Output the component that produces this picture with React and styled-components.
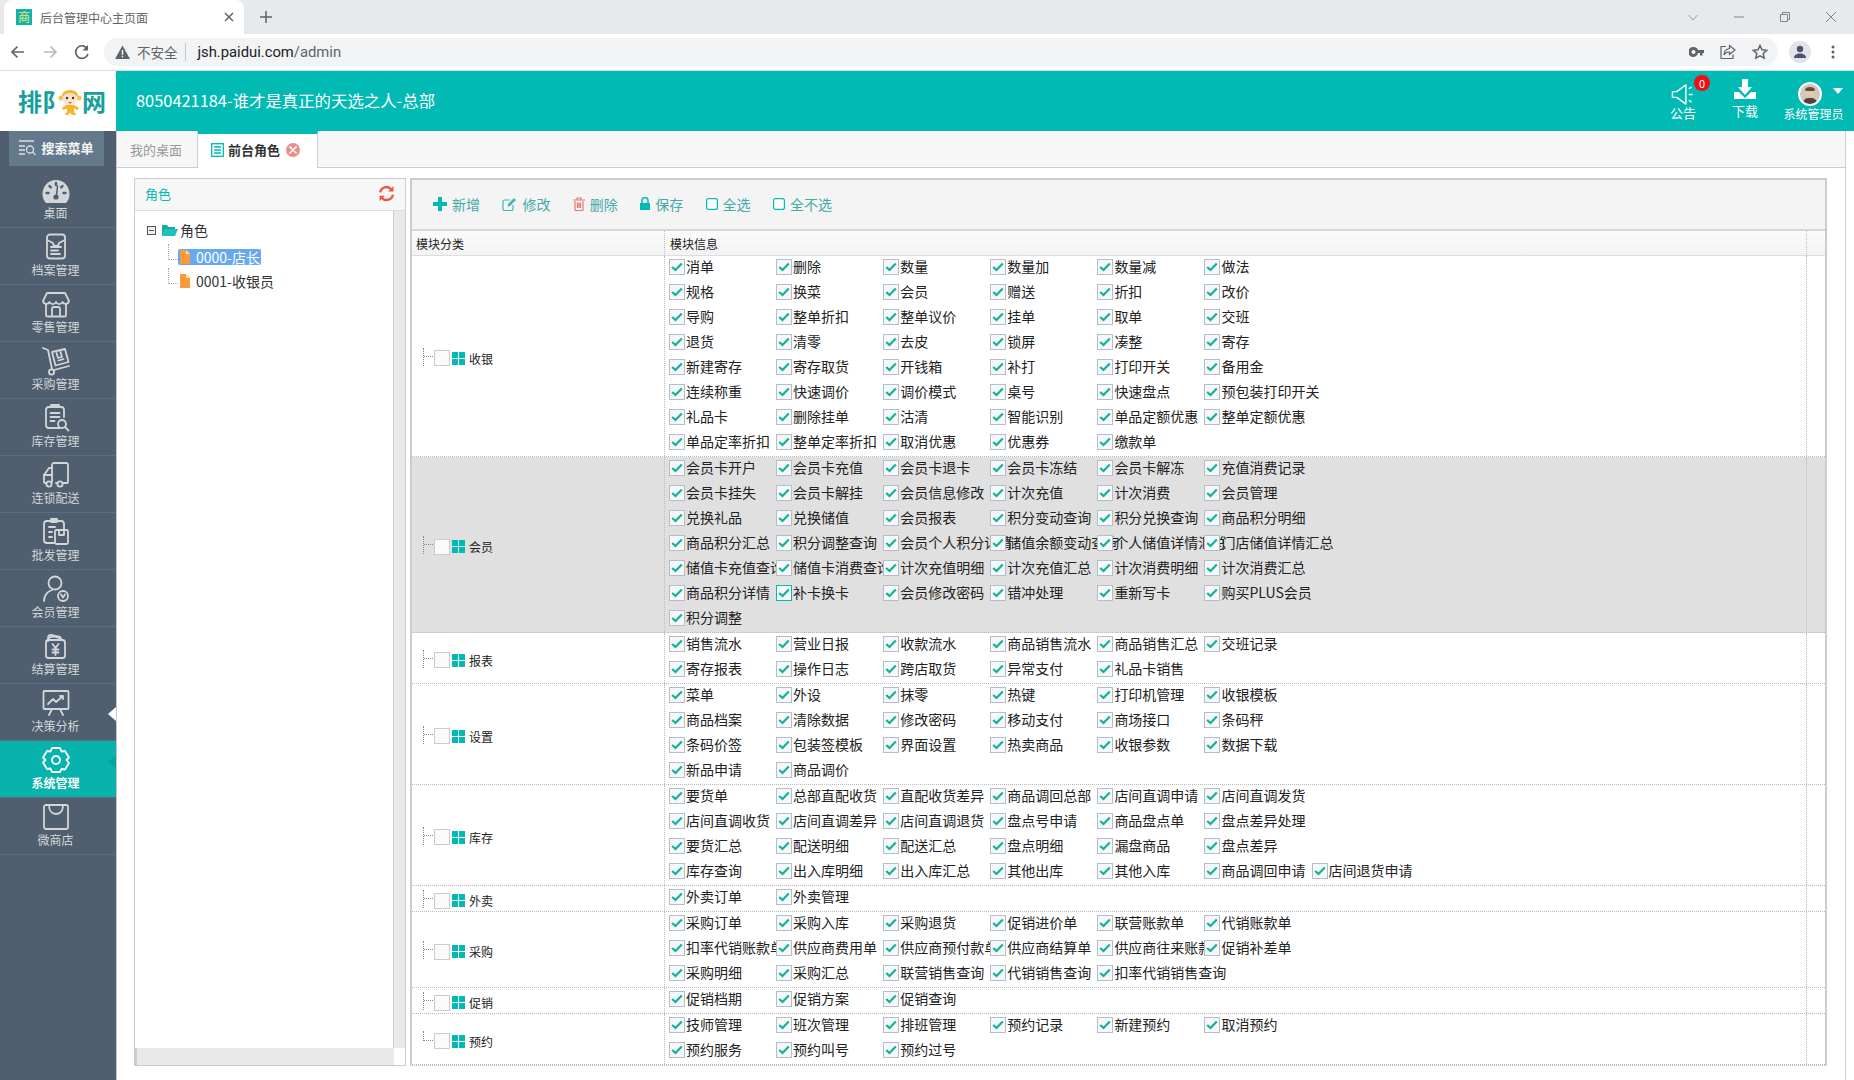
import React from 'react'
import styled, { createGlobalStyle } from 'styled-components'

const TEAL = '#00bab3'
const FONT = `"Noto Sans CJK SC", "Liberation Sans", sans-serif`

const GlobalStyle = createGlobalStyle`
  html, body {
    margin: 0;
    padding: 0;
    background: #fff;
    font-family: ${FONT};
    overflow: hidden;
  }
  * { box-sizing: border-box; }
`

const Page = styled.div`
  width: 1854px;
  height: 1080px;
  display: flex;
  flex-direction: column;
  overflow: hidden;
`

/* browser chrome */
const TabStrip = styled.div`
  height: 34px;
  background: #e7eaed;
  display: flex;
  align-items: stretch;
  padding-left: 4px;
  flex-shrink: 0;
`
const BrowserTab = styled.div`
  width: 240px;
  background: #fff;
  border-radius: 8px 8px 0 0;
  display: flex;
  align-items: center;
  padding-left: 12px;
  font-size: 12px;
  color: #5f6368;
`
const Favicon = styled.span`
  width: 16px;
  height: 16px;
  background: #10b5a8;
  color: #f1e27a;
  font-size: 12px;
  line-height: 16px;
  text-align: center;
  margin-right: 8px;
`
const TabClose = styled.span`
  margin-left: auto;
  margin-right: 10px;
  display: flex;
`
const NewTab = styled.span`
  width: 44px;
  display: flex;
  align-items: center;
  justify-content: center;
`
const WindowButtons = styled.div`
  margin-left: auto;
  display: flex;
  align-items: center;
  gap: 36px;
  padding-right: 18px;
`
const BrowserBar = styled.div`
  height: 37px;
  background: #fff;
  border-bottom: 1px solid #dadce0;
  display: flex;
  align-items: center;
  flex-shrink: 0;
`
const NavButtons = styled.div`
  width: 104px;
  display: flex;
  padding-left: 9px;
  gap: 14px;
`
const Address = styled.div`
  width: 1674px;
  height: 28px;
  border-radius: 14px;
  background: #f1f3f4;
  display: flex;
  align-items: center;
  padding-left: 11px;
  font-size: 14px;
  color: #5f6368;
`
const Insecure = styled.span`
  margin-left: 7px;
  padding-right: 7px;
  border-right: 1px solid #c4c7ca;
  line-height: 18px;
  font-size: 13.5px;
`
const Url = styled.span`
  margin-left: 12px;
  font-family: Roboto, "Noto Sans", sans-serif;
  font-size: 14.8px;
  color: #202124;
  em {
    font-style: normal;
    color: #5f6368;
  }
`
const AddressTools = styled.div`
  margin-left: auto;
  display: flex;
  align-items: center;
  gap: 16px;
  padding-right: 10px;
`
const Profile = styled.span`
  width: 22px;
  height: 22px;
  border-radius: 50%;
  background: #e1e3e8;
  margin-left: 11px;
  display: flex;
  align-items: center;
  justify-content: center;
`
const MoreDots = styled.span`
  margin-left: 20px;
  display: flex;
`

/* app header */
const AppHeader = styled.header`
  height: 60px;
  display: flex;
  flex-shrink: 0;
`
const Logo = styled.div`
  width: 116px;
  background: #fff;
  display: flex;
  align-items: center;
  padding-left: 18px;
  color: #17a09a;
  font-size: 24px;
  font-weight: 700;
  line-height: 1;
`
const LogoChar = styled.span`
  flex-shrink: 0;
  margin-right: ${p => p.$pull || 0}px;
`
const HeaderBar = styled.div`
  flex: 1;
  background: ${TEAL};
  display: flex;
  align-items: center;
  color: #fff;
`
const ShopName = styled.div`
  margin: 0 0 2px 20px;
  font-size: 16.4px;
`
const HeaderTools = styled.div`
  margin-left: auto;
  display: flex;
  height: 100%;
  padding-right: 9px;
`
const HeaderTool = styled.div`
  position: relative;
  width: ${p => p.$width}px;
  display: flex;
  flex-direction: column;
  align-items: center;
  padding-top: ${p => p.$top}px;
  font-size: ${p => p.$size || 13}px;
  line-height: 14px;
  white-space: nowrap;
  svg { display: block; }
`
const Badge = styled.span`
  position: absolute;
  top: 4px;
  left: 36px;
  width: 16px;
  height: 16px;
  border-radius: 50%;
  background: #f50b12;
  font-size: 11px;
  line-height: 16px;
  text-align: center;
`
const Avatar = styled.span`
  width: 24px;
  height: 24px;
  border-radius: 50%;
  border: 2px solid #fff;
  background: #cfc8c0;
  overflow: hidden;
  margin: 1px 7px 1px 0;
  display: block;
`
const Caret = styled.span`
  position: absolute;
  top: 17px;
  right: 2px;
  border-left: 5px solid transparent;
  border-right: 5px solid transparent;
  border-top: 6px solid #fff;
`

/* sidebar */
const Body = styled.div`
  flex: 1;
  display: flex;
  min-height: 0;
`
const Sidebar = styled.aside`
  width: 117px;
  background: #4f5f6f;
  border-right: 1px solid #c9c9c9;
  flex-shrink: 0;
`
const SearchMenu = styled.div`
  width: 95px;
  height: 35px;
  margin: 0 0 5px 9px;
  padding-bottom: 2px;
  background: #65798d;
  color: #f4f4f4;
  font-size: 13px;
  font-weight: 700;
  display: flex;
  align-items: center;
  justify-content: center;
  gap: 5px;
`
const MenuItem = styled.div`
  position: relative;
  height: 57px;
  padding: 4px 5px 0 0;
  display: flex;
  flex-direction: column;
  align-items: center;
  border-bottom: 1px solid #5b6d7e;
  background: ${p => (p.$active ? '#08b3ad' : 'transparent')};
  color: ${p => (p.$active ? '#fff' : '#d3d6d9')};
  font-size: 12px;
  font-weight: ${p => (p.$active ? 700 : 400)};
  line-height: 16px;
  svg { display: block; }
`
const MenuArrow = styled.span`
  position: absolute;
  right: 0;
  top: ${p => p.$top}px;
  border-top: 7px solid transparent;
  border-bottom: 7px solid transparent;
  border-right: 8px solid ${p => p.$color};
`

/* main area */
const Main = styled.main`
  flex: 1;
  display: flex;
  flex-direction: column;
  min-width: 0;
  padding-right: 8px;
`
const TabsBar = styled.div`
  height: 37px;
  background: #f7f7f7;
  border-bottom: 1px solid #c5d0dd;
  border-right: 1px solid #c5d0dd;
  display: flex;
  flex-shrink: 0;
`
const PageTab = styled.div`
  height: ${p => (p.$active ? '37px' : '36px')};
  width: ${p => (p.$active ? '120px' : '81px')};
  padding: ${p => (p.$active ? '0 0 3px 13px' : '0 0 0 13px')};
  display: flex;
  align-items: center;
  gap: 4px;
  font-size: 13px;
  font-weight: ${p => (p.$active ? 700 : 400)};
  color: ${p => (p.$active ? '#333' : '#999')};
  background: ${p => (p.$active ? '#fff' : 'transparent')};
  border-right: 1px solid #c5d0dd;
  border-top: ${p => (p.$active ? `3px solid ${TEAL}` : '0')};
`
const TabCloseDot = styled.span`
  width: 14px;
  height: 14px;
  border-radius: 50%;
  background: #e68f8c;
  color: #fff;
  font-size: 12px;
  line-height: 14px;
  text-align: center;
  font-weight: 700;
  margin-left: 2px;
`
const Content = styled.div`
  flex: 1;
  min-height: 0;
  display: flex;
  gap: 4px;
  padding: 10px 18px 14px 17px;
  border-right: 1px solid #c5d0dd;
`

/* tree panel */
const TreePanel = styled.section`
  width: 272px;
  flex-shrink: 0;
  border: 1px solid #ccc;
  display: flex;
  flex-direction: column;
`
const TreeHead = styled.div`
  height: 32px;
  background: #f7f7f7;
  border-bottom: 1px solid #ddd;
  display: flex;
  align-items: center;
  justify-content: space-between;
  padding: 0 10px 3px 10px;
  color: ${TEAL};
  font-size: 13px;
`
const TreeBody = styled.div`
  flex: 1;
  display: grid;
  grid-template-columns: 1fr 11px;
  grid-template-rows: 1fr 17px;
  min-height: 0;
`
const TreeList = styled.div`
  padding: 9px 0 0 12px;
  border-right: 1px solid #ccc;
  font-size: 14px;
  color: #333;
`
const TreeRoot = styled.div`
  display: flex;
  align-items: center;
  height: 20px;
  gap: 2px;
  margin-bottom: 9px;
`
const FolderIcon = styled.svg`
  margin-left: 3px;
`
const TreeLeaf = styled.div`
  display: flex;
  align-items: center;
  height: 16px;
  margin: 0 0 8px 21px;
`
const TreeDots = styled.span`
  width: 10px;
  height: 16px;
  border-left: 1px dotted #aaa;
  border-bottom: 1px dotted #aaa;
  margin-bottom: 10px;
`
const LeafName = styled.span`
  display: flex;
  align-items: center;
  gap: 6px;
  height: 16px;
  padding: 0 1px 0 2px;
  border-radius: 2px;
  background: ${p => (p.$selected ? '#66a9ee' : 'transparent')};
  color: ${p => (p.$selected ? '#fff' : '#333')};
`
const ScrollTrackV = styled.div`
  background: #e9e9e9;
`
const ScrollTrackH = styled.div`
  background: #e9e9e9;
  border-left: 2px solid #ccc;
`
const ScrollCorner = styled.div`
  background: #fff;
`

/* right panel */
const RolePanel = styled.section`
  width: 1417px;
  flex-shrink: 0;
  border: 2px solid #ccc;
  border-bottom: 1px dotted #bbb;
  display: flex;
  flex-direction: column;
`
const Toolbar = styled.div`
  height: 51px;
  background: #f4f4f4;
  border-bottom: 2px solid #d6d6d6;
  display: flex;
  align-items: center;
  gap: 22.4px;
  padding: 0 0 2px 21px;
  flex-shrink: 0;
`
const ToolButton = styled.span`
  display: inline-flex;
  align-items: center;
  gap: 5px;
  font-size: 14px;
  color: #45a9a8;
`
const TableHead = styled.div`
  height: 25px;
  display: grid;
  grid-template-columns: 252px 1fr 19px;
  background: linear-gradient(#fbfbfb, #f3f3f3);
  border-bottom: 1px solid #ddd;
  font-size: 12px;
  line-height: 25px;
  color: #222;
  flex-shrink: 0;
`
const HeadCell = styled.div`
  padding-left: ${p => (p.$first ? '4px' : '5px')};
  border-left: ${p => (p.$first ? '0' : '1px dotted #bbb')};
`
const Group = styled.div`
  display: grid;
  grid-template-columns: 252px 1fr 19px;
  border-bottom: 1px dotted #bbb;
  background: ${p => (p.$shaded ? '#e0e0e0' : '#fff')};
`
const GroupName = styled.div`
  display: flex;
  align-items: center;
  padding: 4px 0 0 11px;
  font-size: 12px;
  color: #222;
`
const Connector = styled.span`
  width: 10px;
  height: ${p => (p.$last ? '10px' : '18px')};
  margin-top: ${p => (p.$last ? '-11px' : '-3px')};
  position: relative;
  border-left: 1px dotted #888;
  &::after {
    content: '';
    position: absolute;
    left: 0;
    top: ${p => (p.$last ? '9px' : '8px')};
    width: 9px;
    border-top: 1px dotted #888;
  }
`
const GroupBox = styled.span`
  width: 16px;
  height: 16px;
  background: #fafafa;
  border: 1px solid #ccc;
  margin-left: 1px;
`
const GroupIcon = styled.span`
  margin: 0 4px 0 2px;
  display: flex;
`
const ItemsCell = styled.div`
  border-left: 1px dotted #bbb;
  padding-left: 4px;
`
const SideCell = styled.div`
  border-left: 1px dotted #bbb;
`
const ItemRow = styled.div`
  height: 25px;
  padding-bottom: 4px;
  display: flex;
  align-items: center;
`
const Item = styled.label`
  width: 107.1px;
  flex-shrink: 0;
  display: flex;
  align-items: center;
  gap: 1px;
  font-size: 14px;
  color: #222;
  white-space: nowrap;
`
const ItemText = styled.span`
  padding-bottom: 2px;
`
const Check = styled.span`
  position: relative;
  z-index: 1;
  width: 16px;
  height: 16px;
  flex-shrink: 0;
  background: #f4f8fb;
  border: 1px solid ${p => (p.$hover ? TEAL : '#b4bec8')};
  display: flex;
  align-items: center;
  justify-content: center;
`

const groups = [
  {
    name: '收银',
    rows: [
      ['消单', '删除', '数量', '数量加', '数量减', '做法'],
      ['规格', '换菜', '会员', '赠送', '折扣', '改价'],
      ['导购', '整单折扣', '整单议价', '挂单', '取单', '交班'],
      ['退货', '清零', '去皮', '锁屏', '凑整', '寄存'],
      ['新建寄存', '寄存取货', '开钱箱', '补打', '打印开关', '备用金'],
      ['连续称重', '快速调价', '调价模式', '桌号', '快速盘点', '预包装打印开关'],
      ['礼品卡', '删除挂单', '沽清', '智能识别', '单品定额优惠', '整单定额优惠'],
      ['单品定率折扣', '整单定率折扣', '取消优惠', '优惠券', '缴款单']
    ]
  },
  {
    name: '会员',
    shaded: true,
    rows: [
      ['会员卡开户', '会员卡充值', '会员卡退卡', '会员卡冻结', '会员卡解冻', '充值消费记录'],
      ['会员卡挂失', '会员卡解挂', '会员信息修改', '计次充值', '计次消费', '会员管理'],
      ['兑换礼品', '兑换储值', '会员报表', '积分变动查询', '积分兑换查询', '商品积分明细'],
      ['商品积分汇总', '积分调整查询', '会员个人积分详情', '储值余额变动查询', '个人储值详情汇总', '门店储值详情汇总'],
      ['储值卡充值查询', '储值卡消费查询', '计次充值明细', '计次充值汇总', '计次消费明细', '计次消费汇总'],
      ['商品积分详情', '补卡换卡', '会员修改密码', '错冲处理', '重新写卡', '购买PLUS会员'],
      ['积分调整']
    ]
  },
  {
    name: '报表',
    rows: [
      ['销售流水', '营业日报', '收款流水', '商品销售流水', '商品销售汇总', '交班记录'],
      ['寄存报表', '操作日志', '跨店取货', '异常支付', '礼品卡销售']
    ]
  },
  {
    name: '设置',
    rows: [
      ['菜单', '外设', '抹零', '热键', '打印机管理', '收银模板'],
      ['商品档案', '清除数据', '修改密码', '移动支付', '商场接口', '条码秤'],
      ['条码价签', '包装签模板', '界面设置', '热卖商品', '收银参数', '数据下载'],
      ['新品申请', '商品调价']
    ]
  },
  {
    name: '库存',
    rows: [
      ['要货单', '总部直配收货', '直配收货差异', '商品调回总部', '店间直调申请', '店间直调发货'],
      ['店间直调收货', '店间直调差异', '店间直调退货', '盘点号申请', '商品盘点单', '盘点差异处理'],
      ['要货汇总', '配送明细', '配送汇总', '盘点明细', '漏盘商品', '盘点差异'],
      ['库存查询', '出入库明细', '出入库汇总', '其他出库', '其他入库', '商品调回申请', '店间退货申请']
    ]
  },
  { name: '外卖', rows: [['外卖订单', '外卖管理']] },
  {
    name: '采购',
    rows: [
      ['采购订单', '采购入库', '采购退货', '促销进价单', '联营账款单', '代销账款单'],
      ['扣率代销账款单', '供应商费用单', '供应商预付款单', '供应商结算单', '供应商往来账款', '促销补差单'],
      ['采购明细', '采购汇总', '联营销售查询', '代销销售查询', '扣率代销销售查询']
    ]
  },
  { name: '促销', rows: [['促销档期', '促销方案', '促销查询']] },
  {
    name: '预约',
    last: true,
    rows: [
      ['技师管理', '班次管理', '排班管理', '预约记录', '新建预约', '取消预约'],
      ['预约服务', '预约叫号', '预约过号']
    ]
  }
]

const MenuIcon = ({ children }) => (
  <svg
    width='30'
    height='30'
    viewBox='0 0 30 30'
    fill='none'
    stroke='currentColor'
    strokeWidth='1.8'
    strokeLinejoin='round'
    strokeLinecap='round'
  >
    {children}
  </svg>
)

const menus = [
  {
    label: '桌面',
    icon: (
      <MenuIcon>
        <path
          d='M5 28c-2-2-3.500-5-3.500-9C1.500 11 7.600 5 15 5s13.500 6 13.500 14c0 4-1.500 7-3.500 9z'
          fill='currentColor'
          stroke='none'
        />
        <path d='M15 8v2M8.500 11l1.300 1.400M21.500 11l-1.300 1.400M5.500 18h2M22.500 18h2' stroke='#4f5f6f' strokeWidth='2.400' />
        <path d='M16.500 11l-1 9' stroke='#4f5f6f' strokeWidth='1.500' />
        <circle cx='15' cy='22' r='2.600' fill='#4f5f6f' stroke='none' />
      </MenuIcon>
    )
  },
  {
    label: '档案管理',
    icon: (
      <MenuIcon>
        <rect x='6' y='2.500' width='18' height='24' rx='3' />
        <path d='M6 8l6 3a3 3 0 0 0 6 0l6-3' />
        <path d='M10 15h10M10 18.500h7M10 22h9' />
      </MenuIcon>
    )
  },
  {
    label: '零售管理',
    icon: (
      <MenuIcon>
        <path d='M6 4h18l4 8a3.500 3.500 0 0 1-6.500 1 3.500 3.500 0 0 1-6.500 0 3.500 3.500 0 0 1-6.500 0A3.500 3.500 0 0 1 2 12z' />
        <path d='M5 15v11a1.500 1.500 0 0 0 1.500 1.500h17A1.500 1.500 0 0 0 25 26V15' />
        <path d='M11 27v-7a2 2 0 0 1 2-2h4a2 2 0 0 1 2 2v7' />
      </MenuIcon>
    )
  },
  {
    label: '采购管理',
    icon: (
      <MenuIcon>
        <path d='M2 2l5 2 4 19' />
        <path d='M13 24l15-4' />
        <circle cx='10.500' cy='26' r='2.600' />
        <path d='M11 6l13-3 3.500 13-13 3.500z' />
        <path d='M15.500 7l1.500 5 4-1-1.500-5M17.500 14.500l5-1.300' />
      </MenuIcon>
    )
  },
  {
    label: '库存管理',
    icon: (
      <MenuIcon>
        <path d='M19 25H8a3 3 0 0 1-3-3V7a3 3 0 0 1 3-3h12a3 3 0 0 1 3 3v7' />
        <path d='M10 4V2h8v2M9.500 10h9M9.500 14h9M9.500 18h4' />
        <circle cx='21' cy='21' r='4' />
        <path d='M24 24l3.500 3.500' />
      </MenuIcon>
    )
  },
  {
    label: '连锁配送',
    icon: (
      <MenuIcon>
        <path d='M11 22V5a2 2 0 0 1 2-2h12a2 2 0 0 1 2 2v17a1 1 0 0 1-1 1h-4M16 23h-1' />
        <path d='M11 8H8L3 15v7a1 1 0 0 0 1 1h1' />
        <path d='M3 15h8' />
        <circle cx='8' cy='24' r='2.600' />
        <circle cx='19' cy='24' r='2.600' />
      </MenuIcon>
    )
  },
  {
    label: '批发管理',
    icon: (
      <MenuIcon>
        <path d='M13 26H6a3 3 0 0 1-3-3V7a3 3 0 0 1 3-3h14a3 3 0 0 1 3 3v5' />
        <path d='M10 2h6v3h-6zM8 10h6M8 15h3M8 20h3' />
        <rect x='14' y='13' width='13' height='14' rx='1.500' />
        <path d='M18 13v5h5v-5' />
      </MenuIcon>
    )
  },
  {
    label: '会员管理',
    icon: (
      <MenuIcon>
        <circle cx='14' cy='9' r='6.500' />
        <path d='M3 27c0-6 4-10 8-11' />
        <circle cx='22' cy='22' r='5' />
        <path d='M20 20.500l2 3 2-3' />
      </MenuIcon>
    )
  },
  {
    label: '结算管理',
    icon: (
      <MenuIcon>
        <path d='M7 10V7a3 3 0 0 1 3-3l9 2 2 3' />
        <path d='M8 7c4-3 10-1 13 2' />
        <rect x='5' y='9' width='19' height='18' rx='2.500' />
        <path d='M11.500 13l3 4 3-4M14.500 17v7M11.500 18.500h6M11.500 21.500h6' />
      </MenuIcon>
    )
  },
  {
    label: '决策分析',
    icon: (
      <MenuIcon>
        <rect x='2.500' y='3' width='25' height='18' rx='1' />
        <path d='M7 16l5-5 3 3 7-6M19 8h3v3' />
        <path d='M11 21l-3 6M19 21l3 6' />
      </MenuIcon>
    )
  },
  {
    label: '系统管理',
    icon: (
      <MenuIcon>
        <path d='M11 3h8l1.500 3.500 3.500-.5 4 6.500L25.500 15l2.500 3-4 6.500-3.500-.5L19 27h-8l-1.500-3.500-3.500.5-4-6.500L4.500 15 2 12.500 6 6l3.500.5z' />
        <circle cx='15' cy='15' r='4' />
      </MenuIcon>
    )
  },
  {
    label: '微商店',
    icon: (
      <MenuIcon>
        <path d='M5 3h20a2 2 0 0 1 2 2v20a2 2 0 0 1-2 2H5a2 2 0 0 1-2-2V5a2 2 0 0 1 2-2z' />
        <path d='M8 3c0 6 3 9 7 9s7-3 7-9' />
      </MenuIcon>
    )
  }
]

const CheckMark = () => (
  <svg width='12' height='10' viewBox='0 0 12 10'>
    <path d='M1.200 5l3.300 3 6.300-6.500' fill='none' stroke='#17b097' strokeWidth='2.200' />
  </svg>
)

const FileIcon = ({ color = '#fb9a3c' }) => (
  <svg width='10' height='14' viewBox='0 0 10 14'>
    <path d='M0 0h6l4 4v10H0z' fill={color} />
    <path d='M6 0l4 4H6z' fill='#fde0bd' />
  </svg>
)

const GridIcon = () => (
  <svg width='13' height='13' viewBox='0 0 13 13' fill={TEAL}>
    <rect width='6' height='6' />
    <rect x='7' width='6' height='6' />
    <rect y='7' width='6' height='6' />
    <rect x='7' y='7' width='6' height='6' />
  </svg>
)

const EmptyBox = () => (
  <svg width='12' height='12' viewBox='0 0 12 12'>
    <rect x='.6' y='.6' width='10.800' height='10.800' rx='2' fill='#fff' stroke={TEAL} strokeWidth='1.200' />
  </svg>
)

const PermissionRow = ({ items }) => (
  <ItemRow>
    {items.map(text => (
      <Item key={text}>
        <Check $hover={text === '补卡换卡'}>
          <CheckMark />
        </Check>
        <ItemText>{text}</ItemText>
      </Item>
    ))}
  </ItemRow>
)

const App = () => (
  <Page>
    <GlobalStyle />
    <TabStrip>
      <BrowserTab>
        <Favicon>商</Favicon>
        后台管理中心主页面
        <TabClose>
          <svg width='10' height='10' viewBox='0 0 10 10' stroke='#5f6368' strokeWidth='1.500'>
            <path d='M1 1l8 8M9 1l-8 8' />
          </svg>
        </TabClose>
      </BrowserTab>
      <NewTab>
        <svg width='12' height='12' viewBox='0 0 12 12' stroke='#5f6368' strokeWidth='1.500'>
          <path d='M6 0v12M0 6h12' />
        </svg>
      </NewTab>
      <WindowButtons>
        <svg width='10' height='7' viewBox='0 0 10 7' fill='none' stroke='#9aa0a6'>
          <path d='M.5 1l4.500 5 4.500-5' />
        </svg>
        <svg width='10' height='10' viewBox='0 0 10 10' stroke='#80868b'>
          <path d='M0 5h10' />
        </svg>
        <svg width='10' height='10' viewBox='0 0 10 10' fill='none' stroke='#80868b'>
          <path d='M.5 2.500h7v7h-7zM2.500 2.500v-2h7v7h-2' />
        </svg>
        <svg width='10' height='10' viewBox='0 0 10 10' stroke='#80868b'>
          <path d='M0 0l10 10M10 0L0 10' />
        </svg>
      </WindowButtons>
    </TabStrip>
    <BrowserBar>
      <NavButtons>
        <svg width='18' height='18' viewBox='0 0 18 18' fill='none' stroke='#5f6368' strokeWidth='1.700'>
          <path d='M15 9H3M8.500 3.500L3 9l5.500 5.500' />
        </svg>
        <svg width='18' height='18' viewBox='0 0 18 18' fill='none' stroke='#b5b8bc' strokeWidth='1.700'>
          <path d='M3 9h12M9.500 3.500L15 9l-5.500 5.500' />
        </svg>
        <svg width='18' height='18' viewBox='0 0 18 18' fill='none' stroke='#5f6368' strokeWidth='1.700'>
          <path d='M14.500 6A6.300 6.300 0 1 0 15 11' />
          <path d='M15 2v5.500H9.500z' fill='#5f6368' stroke='none' />
        </svg>
      </NavButtons>
      <Address>
        <svg width='15' height='14' viewBox='0 0 15 14'>
          <path d='M7.500 .5L15 14H0z' fill='#5f6368' />
          <path d='M6.800 5h1.400v4.800H6.800zM6.800 10.800h1.400v1.400H6.800z' fill='#fff' />
        </svg>
        <Insecure>不安全</Insecure>
        <Url>
          jsh.paidui.com<em>/admin</em>
        </Url>
        <AddressTools>
          <svg width='15' height='10' viewBox='0 0 15 10' fill='#5f6368'>
            <path d='M4.500 0a5 5 0 0 1 4.600 3H15v3h-1.500v2.500h-2.500V6H9.100A5 5 0 1 1 4.500 0zm0 3a2 2 0 1 0 0 4 2 2 0 0 0 0-4z' />
          </svg>
          <svg width='16' height='16' viewBox='0 0 16 16' fill='none' stroke='#5f6368' strokeWidth='1.200'>
            <path d='M6 2.500H1v12h12v-4' />
            <path d='M9.500 1.500L15 6l-5.500 4.500V8C7 8 5 9 4 11c0-3.500 2-6 5.500-6.500z' />
          </svg>
          <svg width='16' height='16' viewBox='0 0 16 16' fill='none' stroke='#5f6368' strokeWidth='1.500'>
            <path d='M8 1.500l2 4.300 4.700.5-3.500 3.200 1 4.600L8 11.800l-4.200 2.300 1-4.600L1.300 6.300 6 5.800z' />
          </svg>
        </AddressTools>
      </Address>
      <Profile>
        <svg width='14' height='14' viewBox='0 0 14 14' fill='#4a5568'>
          <circle cx='7' cy='4' r='3.200' />
          <path d='M1 13c0-3 2.500-4.500 6-4.500s6 1.500 6 4.500z' />
        </svg>
      </Profile>
      <MoreDots>
        <svg width='4' height='14' viewBox='0 0 4 14' fill='#5f6368'>
          <circle cx='2' cy='2' r='1.500' />
          <circle cx='2' cy='7' r='1.500' />
          <circle cx='2' cy='12' r='1.500' />
        </svg>
      </MoreDots>
    </BrowserBar>

    <AppHeader>
      <Logo>
        <LogoChar>排</LogoChar>
        <LogoChar $pull={-8}>阝</LogoChar>
        <svg width='24' height='27' viewBox='0 0 24 27'>
          <path d='M4 8C4 0 20 0 20 8z' fill='#f7b52c' />
          <circle cx='3' cy='10' r='2.500' fill='#f7c04a' />
          <circle cx='21' cy='10' r='2.500' fill='#f7c04a' />
          <ellipse cx='12' cy='11' rx='7.500' ry='6' fill='#fbe3cf' />
          <circle cx='9' cy='10' r='1.200' fill='#40332a' />
          <circle cx='15' cy='10' r='1.200' fill='#40332a' />
          <path d='M10 14h4l-2 1.800z' fill='#d9534f' />
          <path d='M8 17h8l5 3-1.500 2-3.500-1.500V24l2.500 3H14l-2-2.500L10 27H6.500L9 24v-3.500L5.500 22 4 20z' fill='#f7b52c' />
        </svg>
        <LogoChar>网</LogoChar>
      </Logo>
      <HeaderBar>
        <ShopName>8050421184-谁才是真正的天选之人-总部</ShopName>
        <HeaderTools>
          <HeaderTool $width={50} $top={12}>
            <Badge>0</Badge>
            <svg width='24' height='23' viewBox='0 0 24 24' fill='none' stroke='#fff' strokeWidth='1.500'>
              <path d='M1 9h4.500L15 2v20l-9.500-7H1z' strokeLinejoin='round' />
              <path d='M18 6l3-2M18 12h4M18 18l3 2' />
            </svg>
            公告
          </HeaderTool>
          <HeaderTool $width={74} $top={7}>
            <svg width='22' height='26' viewBox='0 0 22 26' fill='#fff'>
              <path d='M8 1h6v8h4l-7 8-7-8h4z' />
              <path d='M0 14h5l6 6 6-6h5v7H0z' />
            </svg>
            下载
          </HeaderTool>
          <HeaderTool $width={63} $top={10} $size={12}>
            <Avatar>
              <svg width='20' height='20' viewBox='0 0 20 20'>
                <circle cx='10' cy='8' r='4.500' fill='#e8c8a8' />
                <path d='M5 6c0-4 10-4 10 0l-1 1H6z' fill='#6b4a3a' />
                <path d='M3 20c0-5 3-6 7-6s7 1 7 6z' fill='#56413a' />
              </svg>
            </Avatar>
            系统管理员
            <Caret />
          </HeaderTool>
        </HeaderTools>
      </HeaderBar>
    </AppHeader>

    <Body>
      <Sidebar>
        <SearchMenu>
          <svg width='17' height='15' viewBox='0 0 17 15' fill='none' stroke='#d9dde1' strokeWidth='1.300'>
            <path d='M0 1h15M0 6h6M0 10h6M0 14h6' />
            <circle cx='11' cy='9.500' r='3.500' />
            <path d='M13.500 12l3 3' />
          </svg>
          搜索菜单
        </SearchMenu>
        {menus.map(menu => (
          <MenuItem key={menu.label} $active={menu.label === '系统管理'}>
            {menu.icon}
            {menu.label}
            {menu.label === '决策分析' && <MenuArrow $top={23} $color='#fff' />}
            {menu.label === '系统管理' && <MenuArrow $top={14} $color='#06a39d' />}
          </MenuItem>
        ))}
      </Sidebar>

      <Main>
        <TabsBar>
          <PageTab>我的桌面</PageTab>
          <PageTab $active>
            <svg width='13' height='14' viewBox='0 0 13 14' fill='none' stroke={TEAL} strokeWidth='1.300'>
              <rect x='.7' y='.7' width='11.600' height='12.600' />
              <path d='M3 4h7M3 7h7M3 10h7' />
            </svg>
            前台角色
            <TabCloseDot>×</TabCloseDot>
          </PageTab>
        </TabsBar>
        <Content>
          <TreePanel>
            <TreeHead>
              角色
              <svg width='17' height='17' viewBox='0 0 16 16' fill='none' stroke='#e8573f' strokeWidth='2.200'>
                <path d='M2 7a6 6 0 0 1 10.500-3M14 9a6 6 0 0 1-10.500 3' />
                <path d='M14.500 1v5h-5zM1.500 15v-5h5z' fill='#e8573f' stroke='none' />
              </svg>
            </TreeHead>
            <TreeBody>
              <TreeList>
                <TreeRoot>
                  <svg width='9' height='9' viewBox='0 0 9 9' fill='#eee' stroke='#555'>
                    <rect x='.5' y='.5' width='8' height='8' />
                    <path d='M2 4.500h5' />
                  </svg>
                  <FolderIcon width='17' height='14' viewBox='0 0 17 14'>
                    <path d='M1 13V2h5l1.500 2H14v2H4.500z' fill='#15a9a7' />
                    <path d='M1 13l3.500-7H17l-3 7z' fill='#1fbfbb' />
                  </FolderIcon>
                  角色
                </TreeRoot>
                <TreeLeaf>
                  <TreeDots />
                  <LeafName $selected>
                    <FileIcon />
                    0000-店长
                  </LeafName>
                </TreeLeaf>
                <TreeLeaf>
                  <TreeDots />
                  <LeafName>
                    <FileIcon />
                    0001-收银员
                  </LeafName>
                </TreeLeaf>
              </TreeList>
              <ScrollTrackV />
              <ScrollTrackH />
              <ScrollCorner />
            </TreeBody>
          </TreePanel>

          <RolePanel>
            <Toolbar>
              <ToolButton>
                <svg width='14' height='14' viewBox='0 0 14 14' fill={TEAL}>
                  <path d='M5 0h4v5h5v4H9v5H5V9H0V5h5z' />
                </svg>
                新增
              </ToolButton>
              <ToolButton>
                <svg width='15' height='14' viewBox='0 0 15 14' fill='none' stroke='#45b5b3' strokeWidth='1.200'>
                  <path d='M11 8v4a1.500 1.500 0 0 1-1.500 1.500h-7A1.500 1.500 0 0 1 1 12V4.500A1.500 1.500 0 0 1 2.500 3H8' />
                  <path d='M5.500 9.500l.5-2.500L12 1l2 2-6 6z' fill='#45b5b3' stroke='none' />
                </svg>
                修改
              </ToolButton>
              <ToolButton>
                <svg width='12' height='14' viewBox='0 0 12 14' fill='none' stroke='#e8766a' strokeWidth='1.200'>
                  <path d='M2 4v8.500a1 1 0 0 0 1 1h6a1 1 0 0 0 1-1V4M0 3h12M4 3V1h4v2M4.500 5.500v5.500M7.500 5.500v5.500M6 5.500v5.500' />
                </svg>
                删除
              </ToolButton>
              <ToolButton>
                <svg width='10' height='13' viewBox='0 0 10 13' fill={TEAL}>
                  <path d='M0 6h10v7H0z' />
                  <path d='M2 6V3.500a3 3 0 0 1 6 0V6' fill='none' stroke={TEAL} strokeWidth='1.500' />
                </svg>
                保存
              </ToolButton>
              <ToolButton>
                <EmptyBox />
                全选
              </ToolButton>
              <ToolButton>
                <EmptyBox />
                全不选
              </ToolButton>
            </Toolbar>
            <TableHead>
              <HeadCell $first>模块分类</HeadCell>
              <HeadCell>模块信息</HeadCell>
              <HeadCell />
            </TableHead>
            {groups.map(group => (
              <Group key={group.name} $shaded={group.shaded}>
                <GroupName>
                  <Connector $last={group.last} />
                  <GroupBox />
                  <GroupIcon>
                    <GridIcon />
                  </GroupIcon>
                  {group.name}
                </GroupName>
                <ItemsCell>
                  {group.rows.map(items => (
                    <PermissionRow key={items[0]} items={items} />
                  ))}
                </ItemsCell>
                <SideCell />
              </Group>
            ))}
          </RolePanel>
        </Content>
      </Main>
    </Body>
  </Page>
)

export default App
